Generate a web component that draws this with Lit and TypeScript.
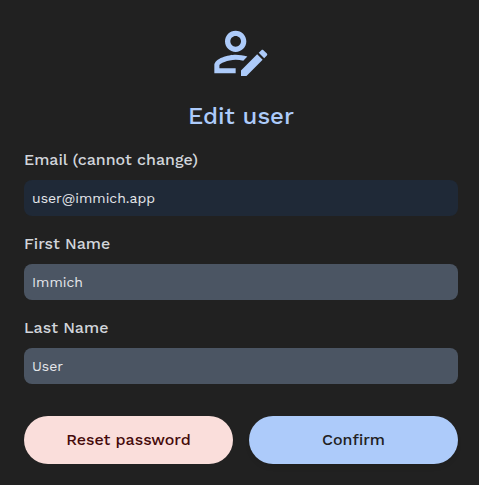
import { LitElement, html, css } from "lit";
import { customElement } from "lit/decorators.js";

@customElement("app-root")
export class AppRoot extends LitElement {
  static styles = css`
    :host {
      display: block;
      box-sizing: border-box;
      width: 479px;
      height: 485px;
      overflow: hidden;
      padding: 20px 21px 0 24px;
      background: #212121;
      font-family: "Work Sans", Inter, "Liberation Sans", sans-serif;
      color: #d1d5db;
    }
    .head {
      display: flex;
      flex-direction: column;
      align-items: center;
      gap: 16px;
      color: #adcbfa;
    }
    .icon {
      display: block;
      width: 64px;
      height: 64px;
      fill: currentColor;
    }
    h1 {
      margin: 0;
      font-size: 24px;
      line-height: 32px;
      font-weight: 500;
    }
    .fields {
      display: flex;
      flex-direction: column;
      gap: 16px;
      margin-top: 16px;
    }
    .field {
      display: flex;
      flex-direction: column;
      gap: 8px;
    }
    label {
      font-size: 16px;
      line-height: 24px;
      font-weight: 500;
    }
    input {
      box-sizing: border-box;
      width: 100%;
      height: 36px;
      border: 0;
      border-radius: 8px;
      padding: 8px;
      outline: 0;
      background: #4b5563;
      color: #e5e7eb;
      font: 400 14px/20px "Work Sans", Inter, "Liberation Sans", sans-serif;
    }
    input:disabled {
      background: #1f2937;
      opacity: 1;
    }
    .actions {
      display: flex;
      gap: 16px;
      margin-top: 32px;
    }
    button {
      flex: 1 1 0;
      height: 48px;
      border: 0;
      padding: 0;
      border-radius: 24px;
      font: 500 16px/24px "Work Sans", Inter, "Liberation Sans", sans-serif;
    }
    .reset {
      background: #fadedb;
      color: #450a0a;
    }
    .confirm {
      background: #adcbfa;
      color: #212121;
      box-shadow: 0 4px 6px -1px #0000000d, 0 2px 4px -2px #0000000d;
    }
  `;

  private field(id: string, label: string, value: string, disabled = false) {
    return html`<div class="field">
      <label for=${id}>${label}</label>
      <input id=${id} .value=${value} ?disabled=${disabled} />
    </div>`;
  }

  render() {
    return html`
      <div class="head">
        <svg class="icon" viewBox="0 0 24 24">
          <path d="M2,17V20H10V18.11H3.9V17C3.9,16.36 7.03,14.9 10,14.9C10.96,14.9 11.94,15.04 12.85,15.27L14.39,13.73C12.91,13.26 11.35,13 10,13C7.33,13 2,14.33 2,17M10,4C7.79,4 6,5.79 6,8C6,10.21 7.79,12 10,12C12.21,12 14,10.21 14,8C14,5.79 12.21,4 10,4M10,10C8.9,10 8,9.11 8,8C8,6.9 8.9,6 10,6C11.11,6 12,6.9 12,8C12,9.11 11.11,10 10,10M21.7,13.35L20.7,14.35L18.65,12.3L19.65,11.3C19.86,11.09 20.21,11.09 20.42,11.3L21.7,12.58C21.91,12.79 21.91,13.14 21.7,13.35M12,18.94L18.06,12.88L20.11,14.93L14.06,21H12V18.94Z" />
        </svg>
        <h1>Edit user</h1>
      </div>
      <div class="fields">
        ${this.field("email", "Email (cannot change)", "user@immich.app", true)}
        ${this.field("first", "First Name", "Immich")}
        ${this.field("last", "Last Name", "User")}
      </div>
      <div class="actions">
        <button class="reset">Reset password</button>
        <button class="confirm">Confirm</button>
      </div>
    `;
  }
}
